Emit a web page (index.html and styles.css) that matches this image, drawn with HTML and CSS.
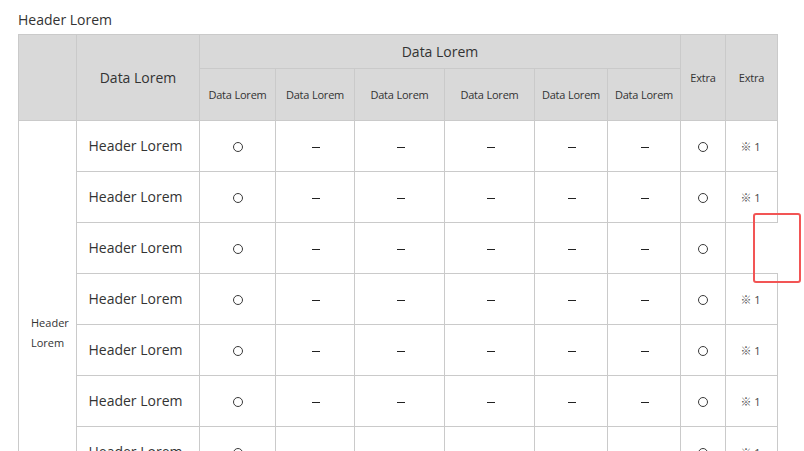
FILE: index.html
```html
<!DOCTYPE html>
<html lang="ja">
<head>
<meta charset="utf-8">
<title>Table</title>
<link rel="stylesheet" href="styles.css">
</head>
<body>
<div class="page">
  <h2 class="title">Header Lorem</h2>
  <table class="spec">
    <colgroup>
      <col class="c-group"><col class="c-name">
      <col class="c-d1"><col class="c-d2"><col class="c-d3"><col class="c-d4"><col class="c-d5"><col class="c-d6">
      <col class="c-x1"><col class="c-x2">
    </colgroup>
    <thead>
      <tr class="h1">
        <th rowspan="2"></th>
        <th rowspan="2" class="big">Data Lorem</th>
        <th colspan="6" class="big">Data Lorem</th>
        <th rowspan="2" class="small">Extra</th>
        <th rowspan="2" class="small">Extra</th>
      </tr>
      <tr class="h2">
        <th class="small">Data Lorem</th>
        <th class="small">Data Lorem</th>
        <th class="small">Data Lorem</th>
        <th class="small">Data Lorem</th>
        <th class="small">Data Lorem</th>
        <th class="small">Data Lorem</th>
      </tr>
    </thead>
    <tbody>
      <tr>
        <td rowspan="8" class="group">Header<br>Lorem</td>
        <td class="name">Header Lorem</td>
        <td><span class="circle"></span></td>
        <td><span class="dash"></span></td><td><span class="dash"></span></td><td><span class="dash"></span></td><td><span class="dash"></span></td><td><span class="dash"></span></td>
        <td><span class="circle"></span></td>
        <td class="note"><span class="mark">※</span> 1</td>
      </tr>
      <tr>
        <td class="name">Header Lorem</td>
        <td><span class="circle"></span></td>
        <td><span class="dash"></span></td><td><span class="dash"></span></td><td><span class="dash"></span></td><td><span class="dash"></span></td><td><span class="dash"></span></td>
        <td><span class="circle"></span></td>
        <td class="note"><span class="mark">※</span> 1</td>
      </tr>
      <tr>
        <td class="name">Header Lorem</td>
        <td><span class="circle"></span></td>
        <td><span class="dash"></span></td><td><span class="dash"></span></td><td><span class="dash"></span></td><td><span class="dash"></span></td><td><span class="dash"></span></td>
        <td><span class="circle"></span></td>
        <td class="note open"></td>
      </tr>
      <tr>
        <td class="name">Header Lorem</td>
        <td><span class="circle"></span></td>
        <td><span class="dash"></span></td><td><span class="dash"></span></td><td><span class="dash"></span></td><td><span class="dash"></span></td><td><span class="dash"></span></td>
        <td><span class="circle"></span></td>
        <td class="note"><span class="mark">※</span> 1</td>
      </tr>
      <tr>
        <td class="name">Header Lorem</td>
        <td><span class="circle"></span></td>
        <td><span class="dash"></span></td><td><span class="dash"></span></td><td><span class="dash"></span></td><td><span class="dash"></span></td><td><span class="dash"></span></td>
        <td><span class="circle"></span></td>
        <td class="note"><span class="mark">※</span> 1</td>
      </tr>
      <tr>
        <td class="name">Header Lorem</td>
        <td><span class="circle"></span></td>
        <td><span class="dash"></span></td><td><span class="dash"></span></td><td><span class="dash"></span></td><td><span class="dash"></span></td><td><span class="dash"></span></td>
        <td><span class="circle"></span></td>
        <td class="note"><span class="mark">※</span> 1</td>
      </tr>
      <tr>
        <td class="name">Header Lorem</td>
        <td><span class="circle"></span></td>
        <td></td><td></td><td></td><td></td><td></td>
        <td><span class="circle"></span></td>
        <td class="note"><span class="mark">※</span> 1</td>
      </tr>
      <tr>
        <td class="name">Header Lorem</td>
        <td><span class="circle"></span></td>
        <td></td><td></td><td></td><td></td><td></td>
        <td><span class="circle"></span></td>
        <td class="note"><span class="mark">※</span> 1</td>
      </tr>
    </tbody>
  </table>
  <div class="highlight"></div>
</div>
</body>
</html>
```

FILE: styles.css
```css
html, body {
  margin: 0;
  padding: 0;
  background: #ffffff;
}

body {
  font-family: "Open Sans", "Noto Sans CJK JP", sans-serif;
  color: #333333;
}

.page {
  position: relative;
  padding: 10px 18px 0 18px;
}

.title {
  margin: 0 0 4px 0;
  font-size: 14px;
  font-weight: 400;
  line-height: 20px;
}

.spec {
  border-collapse: collapse;
  table-layout: fixed;
  width: 759px;
}

.c-group { width: 58px; }
.c-name { width: 123px; }
.c-d1 { width: 76px; }
.c-d2 { width: 79px; }
.c-d3 { width: 90px; }
.c-d4 { width: 90px; }
.c-d5 { width: 73px; }
.c-d6 { width: 73px; }
.c-x1 { width: 45px; }
.c-x2 { width: 52px; }

.spec th,
.spec td {
  border: 1px solid #cacaca;
  padding: 0;
  text-align: center;
  vertical-align: middle;
  font-weight: 400;
}

.spec th {
  background: #d9d9d9;
}

.h1 { height: 34px; }
.h2 { height: 52px; }

.big {
  font-size: 14px;
  line-height: 20px;
}

.small {
  font-size: 11px;
  line-height: 16px;
  letter-spacing: -0.2px;
}

.spec tbody tr { height: 51px; }

.group {
  font-size: 11px;
  line-height: 20px;
  text-align: left !important;
  padding: 16px 0 0 12px !important;
}

.name {
  font-size: 14px;
  line-height: 20px;
  padding-right: 5px !important;
}

.circle {
  display: inline-block;
  width: 8px;
  height: 8px;
  border: 1px solid #3a3a3a;
  border-radius: 50%;
  vertical-align: middle;
  margin-top: -1px;
}

.dash {
  display: inline-block;
  width: 8px;
  height: 1px;
  background: #222222;
  vertical-align: middle;
  margin-left: 2px;
}

.note {
  font-size: 11px;
  line-height: 16px;
  color: #444444;
  padding-right: 2px !important;
}

.mark {
  font-family: "Noto Sans CJK JP", sans-serif;
  font-size: 11px;
  font-weight: 700;
  color: #555555;
}

.spec td.open {
  border-right-style: hidden;
}

.highlight {
  position: absolute;
  left: 753px;
  top: 213px;
  width: 44px;
  height: 66px;
  border: 2px solid #f25555;
  border-radius: 3px;
}
```
